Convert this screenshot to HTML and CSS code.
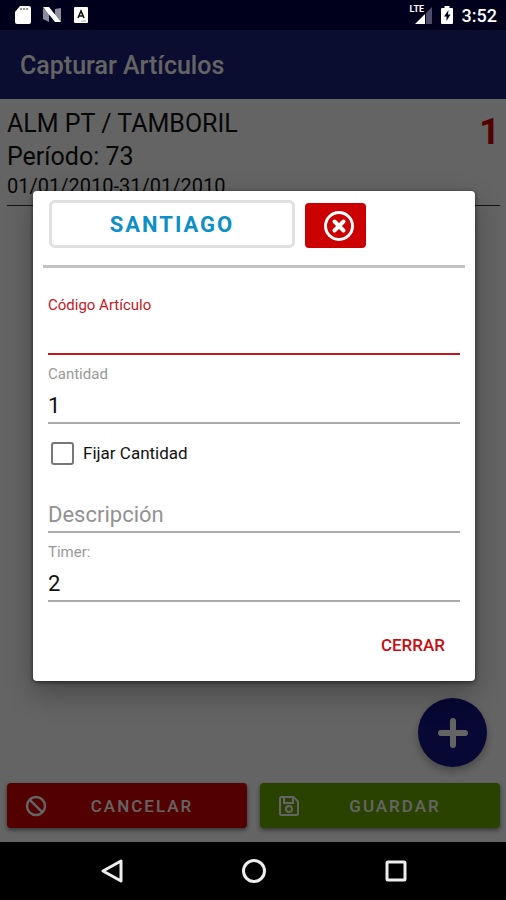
FILE: index.html
```html
<!DOCTYPE html>
<html lang="es">
<head>
<meta charset="utf-8">
<meta name="viewport" content="width=device-width, initial-scale=1">
<title>Capturar Artículos</title>
<link rel="stylesheet" href="styles.css">
</head>
<body>
<div class="status-bar">
  <div class="status-group">
    <svg class="status-icon" viewBox="0 0 18 20" aria-hidden="true"><path d="M6 1h9q2 0 2 2v14q0 2-2 2H3q-2 0-2-2V7z" fill="#fff"/><path d="M7 3v2M10 3v2M13 3v2" stroke="#666" stroke-width="1.4"/></svg>
    <svg class="status-icon status-icon-n" viewBox="0 0 20 18" aria-hidden="true"><path d="M1 2l6 5v9l-6-3zM19 16l-6-5V3l6-1z" fill="#8c8c9c"/><path d="M1 1h6l12 15h-6z" fill="#fff"/></svg>
    <svg class="status-icon" viewBox="0 0 18 20" aria-hidden="true"><rect x="2" y="2" width="14" height="16" rx="1" fill="#fff"/><path d="M6 13l3-7 3 7M7 11h4" fill="none" stroke="#111" stroke-width="1.600"/><path d="M9 16h5" stroke="#aaa"/></svg>
  </div>
  <div class="status-group status-right">
    <span class="signal">
      <svg class="signal-icon" viewBox="0 0 18 19" aria-hidden="true"><path d="M12 7l6-6v17h-6z" fill="#4d4d6a"/><path d="M1 18L11 8v10z" fill="#fff"/></svg>
      <span class="signal-label">LTE</span>
    </span>
    <svg class="battery" viewBox="0 0 12 20" aria-hidden="true"><path d="M3.500 1h5v2H11q1 0 1 1v14q0 1-1 1H1q-1 0-1-1V4q0-1 1-1h2.500z" fill="#fff"/><path d="M7.500 5L3 11.500h2.500V16L9.500 9.500H7z" fill="#00001c"/></svg>
    <span class="clock">3:52</span>
  </div>
</div>

<div class="app">
  <header class="app-header"><h1>Capturar Artículos</h1></header>
  <main class="content">
    <section class="summary">
      <div>
        <p class="summary-line">ALM PT / TAMBORIL</p>
        <p class="summary-line">Período: 73</p>
        <p class="summary-dates">01/01/2010-31/01/2010</p>
      </div>
      <strong class="count">1</strong>
    </section>
    <button class="fab" type="button" aria-label="Agregar">
      <svg viewBox="0 0 32 32" aria-hidden="true"><path d="M16 4v24M4 16h24" stroke="currentColor" stroke-width="6" stroke-linecap="round"/></svg>
    </button>
    <div class="actions">
      <button class="action action-cancel" type="button">
        <svg viewBox="0 0 22 22" aria-hidden="true"><circle cx="11" cy="11" r="9" fill="none" stroke="currentColor" stroke-width="2.500"/><path d="M4.800 4.800l12.400 12.400" stroke="currentColor" stroke-width="2.500"/></svg>
        <span>CANCELAR</span>
      </button>
      <button class="action action-save" type="button">
        <svg viewBox="0 0 22 22" aria-hidden="true"><g fill="none" stroke="currentColor" stroke-width="2"><path d="M3.500 2h12L20 6.500v12q0 1.500-1.500 1.500h-15Q2 20 2 18.500v-15Q2 2 3.500 2z"/><path d="M6 2.500V8h9V2.500"/><circle cx="11" cy="14" r="3"/></g></svg>
        <span>GUARDAR</span>
      </button>
    </div>
  </main>

  <div class="scrim">
    <form class="dialog" role="dialog" aria-label="Artículo">
      <div class="dialog-body">
        <div class="location">
          <button class="location-name" type="button">SANTIAGO</button>
          <button class="location-clear" type="button" aria-label="Quitar">
            <svg viewBox="0 0 32 32" aria-hidden="true"><circle cx="16" cy="16" r="13.500" fill="none" stroke="currentColor" stroke-width="3"/><path d="M11.500 11.500l9 9M20.500 11.500l-9 9" stroke="currentColor" stroke-width="4" stroke-linecap="round"/></svg>
          </button>
        </div>
        <div class="fields">
          <div class="field field-active">
            <label for="codigo">Código Artículo</label>
            <input id="codigo" type="text">
          </div>
          <div class="field">
            <label for="cantidad">Cantidad</label>
            <input id="cantidad" type="text" value="1">
          </div>
          <label class="check"><input type="checkbox">Fijar Cantidad</label>
          <div class="field">
            <input id="descripcion" type="text" placeholder="Descripción" aria-label="Descripción">
          </div>
          <div class="field">
            <label for="timer">Timer:</label>
            <input id="timer" type="text" value="2">
          </div>
        </div>
      </div>
      <div class="dialog-footer">
        <button class="close" type="button">CERRAR</button>
      </div>
    </form>
  </div>
</div>

<nav class="nav-bar" aria-label="Sistema">
  <button type="button" aria-label="Atrás"><svg viewBox="0 0 26 26"><path d="M22 3v20L4 13z"/></svg></button>
  <button type="button" aria-label="Inicio"><svg viewBox="0 0 26 26"><circle cx="13" cy="13" r="10.500"/></svg></button>
  <button type="button" aria-label="Recientes"><svg viewBox="0 0 26 26"><rect x="4" y="4" width="18" height="18" rx="1"/></svg></button>
</nav>
</body>
</html>
```
FILE: styles.css
```css
* {
  box-sizing: border-box;
}

body {
  margin: 0;
  min-height: 100vh;
  display: flex;
  flex-direction: column;
  font-family: Roboto, "Liberation Sans", sans-serif;
  color: #111;
  background: #000;
}

h1,
p {
  margin: 0;
}

button,
input {
  font: inherit;
  color: inherit;
}

button {
  padding: 0;
  border: 0;
  background: none;
}

svg {
  display: block;
}

/* Status bar */
.status-bar {
  display: flex;
  justify-content: space-between;
  align-items: center;
  height: 30px;
  padding: 0 9px 0 14px;
  background: #00001c;
  color: #fff;
}

.status-group {
  display: flex;
  align-items: center;
  gap: 10px;
}

.status-icon {
  width: 18px;
  height: 20px;
}

.status-icon-n {
  width: 20px;
}

.signal {
  position: relative;
}

.signal-icon {
  width: 18px;
  height: 19px;
}

.signal-label {
  position: absolute;
  top: -1px;
  left: -4px;
  font-size: 9px;
  line-height: 9px;
  font-weight: 700;
}

.battery {
  width: 12px;
  height: 20px;
}

.status-right {
  gap: 9px;
}

.clock {
  font-size: 18px;
  font-weight: 500;
}

/* Screen behind the dialog */
.app {
  position: relative;
  flex: 1;
  display: flex;
  flex-direction: column;
  background: #fafafa;
}

.app-header {
  display: flex;
  align-items: center;
  height: 69px;
  padding: 2px 20px 0;
  background: #1b1e78;
  color: #fafafa;
}

.app-header h1 {
  font-size: 25px;
  font-weight: 500;
}

.content {
  flex: 1;
  display: flex;
  flex-direction: column;
  padding: 8px 6px 14px 7px;
}

.summary {
  display: flex;
  justify-content: space-between;
  padding-bottom: 5px;
  border-bottom: 1px solid #333;
}

.summary-line {
  font-size: 25px;
  line-height: 33px;
}

.summary-dates {
  font-size: 20px;
  line-height: 27px;
}

.count {
  padding-top: 4px;
  font-size: 36px;
  line-height: 42px;
  color: #c00;
}

.fab {
  display: grid;
  place-items: center;
  width: 69px;
  height: 69px;
  margin: auto 13px 16px auto;
  border-radius: 50%;
  background: #121480;
  color: #fafafa;
  box-shadow: 0 4px 8px rgba(0, 0, 0, 0.3);
}

.fab svg {
  width: 32px;
  height: 32px;
}

.actions {
  display: grid;
  grid-template-columns: 1fr 1fr;
  gap: 13px;
}

.action {
  display: flex;
  align-items: center;
  height: 45px;
  padding: 0 10px 0 18px;
  border-radius: 4px;
  color: #fafafa;
  font-size: 17px;
  font-weight: 500;
  letter-spacing: 2px;
  box-shadow: 0 2px 4px rgba(0, 0, 0, 0.5);
}

.action svg {
  width: 22px;
  height: 22px;
}

.action span {
  flex: 1;
}

.action-cancel {
  background: #d00000;
}

.action-save {
  background: #69a500;
}

/* Dialog */
.scrim {
  position: absolute;
  inset: 0;
  display: flex;
  align-items: center;
  padding: 0 31px 0 33px;
  background: rgba(0, 0, 0, 0.6);
}

.dialog {
  flex: 1;
  border-radius: 4px;
  background: #fff;
  box-shadow: 0 1px 4px rgba(0, 0, 0, 0.6), 0 12px 28px rgba(0, 0, 0, 0.3);
}

.dialog-body {
  padding: 9px 10px 7px;
}

.location {
  display: flex;
  align-items: flex-end;
  gap: 10px;
  padding: 0 6px 17px;
  border-bottom: 3px solid #c2c2c2;
}

.location-name {
  flex: 0 1 246px;
  height: 48px;
  border: 3px solid #e0e0e0;
  border-radius: 6px;
  color: #0d8fc8;
  font-size: 22px;
  font-weight: 700;
  letter-spacing: 2px;
}

.location-clear {
  display: grid;
  place-items: center;
  width: 61px;
  height: 45px;
  padding-left: 6px;
  border-radius: 4px;
  background: #c00;
  color: #fff;
}

.location-clear svg {
  width: 32px;
  height: 32px;
}

.fields {
  padding: 29px 5px 0;
}

.field {
  display: flex;
  flex-direction: column;
  margin-bottom: 11px;
}

.field:last-child {
  margin-bottom: 0;
}

.field label {
  font-size: 15px;
  line-height: 16px;
  color: #999;
}

.field input {
  width: 100%;
  height: 42px;
  padding: 6px 0 0;
  border: 0;
  border-bottom: 2px solid #aaa;
  border-radius: 0;
  outline: 0;
  background: none;
  font-size: 22px;
}

.field input::placeholder {
  color: #929292;
  opacity: 1;
}

.field-active label {
  color: #c4161c;
}

.field-active input {
  border-color: #c4161c;
}

.check {
  display: flex;
  align-items: center;
  gap: 9px;
  margin-bottom: 20px;
  padding-left: 3px;
  font-size: 17px;
  line-height: 36px;
}

.check input {
  appearance: none;
  width: 23px;
  height: 23px;
  margin: 0;
  border: 2px solid #777;
  border-radius: 3px;
}

.dialog-footer {
  display: flex;
  justify-content: flex-end;
  align-items: center;
  height: 72px;
  padding-right: 30px;
}

.close {
  color: #c90c0f;
  font-size: 17px;
  font-weight: 500;
}

/* System navigation */
.nav-bar {
  display: flex;
  justify-content: center;
  align-items: center;
  gap: 116px;
  height: 58px;
  padding-left: 1px;
  background: #000;
}

.nav-bar svg {
  width: 26px;
  height: 26px;
  fill: none;
  stroke: #eee;
  stroke-width: 3px;
  stroke-linejoin: round;
}
```
